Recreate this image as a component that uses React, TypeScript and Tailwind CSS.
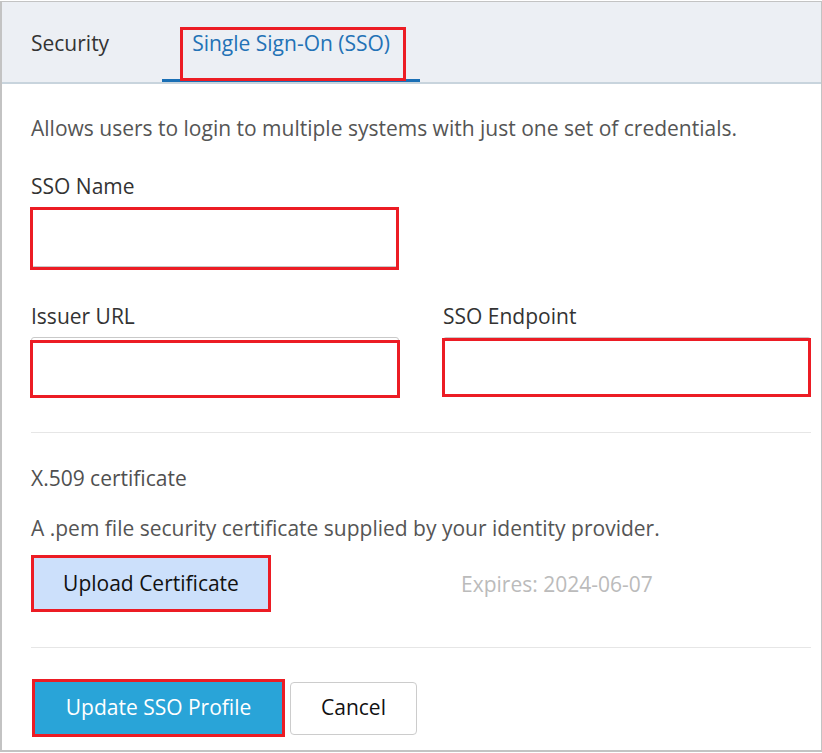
import React from 'react';

const font = "font-['Open_Sans',sans-serif]";

const Field: React.FC<{ label: string; box: string }> = ({ label, box }) => (
  <div>
    <div className="text-[21px] leading-[28px] text-[#333]">{label}</div>
    <div className="relative mt-[7px]">
      <input className="block w-full h-[60px] bg-white border border-[#c9c9c9] rounded-[3px] outline-none" />
      <div className={`absolute border-[3px] border-[#ec1c24] pointer-events-none ${box}`} />
    </div>
  </div>
);

export default function App() {
  return (
    <div className={`${font} w-[822px] h-[753px] bg-white pt-px`}>
      <div className="h-[751px] border-t border-r border-l-2 border-b-2 border-[#c3c3c3] flex flex-col">
        {/* tabs */}
        <div className="h-[82px] bg-[#eceff4] border-b-2 border-[#c8d4dd] flex">
          <div className="pl-[29px] pr-[30px] pt-[27px] text-[21px] leading-[28px] text-[#333]">Security</div>
          <div className="relative ml-[23px] px-[30px] pt-[27px] text-[21px] leading-[28px] text-[#2372b6] border-b-[3px] border-[#1a6fb5]">
            Single Sign-On (SSO)
            <div className="absolute left-[18px] top-[25px] w-[226px] h-[54px] border-[3px] border-[#ec1c24]" />
          </div>
        </div>

        {/* form */}
        <div className="pl-[29px] pr-[10px] pt-[30px]">
          <p className="text-[21px] leading-[28px] text-[#555]">
            Allows users to login to multiple systems with just one set of credentials.
          </p>

          <div className="mt-[30px] w-[368px]">
            <Field label="SSO Name" box="-left-px top-0 w-[369px] h-[63px]" />
          </div>

          <div className="mt-[35px] grid grid-cols-2 gap-x-[44px]">
            <Field label="Issuer URL" box="-left-px top-[3px] w-[370px] h-[58px]" />
            <Field label="SSO Endpoint" box="-left-px top-px w-[369px] h-[59px]" />
          </div>

          <div className="mt-[35px] h-px bg-[#e6e6e6]" />

          <div className="mt-[31px] text-[21px] leading-[28px] text-[#505050]">X.509 certificate</div>
          <p className="mt-[22px] text-[21px] leading-[28px] text-[#555]">
            A .pem file security certificate supplied by your identity provider.
          </p>

          <div className="mt-[13px] flex items-center">
            <button className="w-[240px] h-[57px] bg-[#cce0fb] border-[3px] border-[#ec1c24] text-[21px] text-[#111]">
              Upload Certificate
            </button>
            <span className="ml-[190px] text-[21px] leading-[28px] text-[#bbb]">Expires: 2024-06-07</span>
          </div>

          <div className="mt-[35px] h-px bg-[#e6e6e6]" />

          <div className="mt-[31px] flex items-center">
            <button className="ml-px w-[253px] h-[58px] bg-[#29a4d8] border-[3px] border-[#ec1c24] text-[21px] text-white">
              Update SSO Profile
            </button>
            <button className="ml-[5px] w-[127px] h-[53px] bg-white border border-[#cccccc] rounded-[4px] text-[21px] text-[#111]">
              Cancel
            </button>
          </div>
        </div>
      </div>
    </div>
  );
}
